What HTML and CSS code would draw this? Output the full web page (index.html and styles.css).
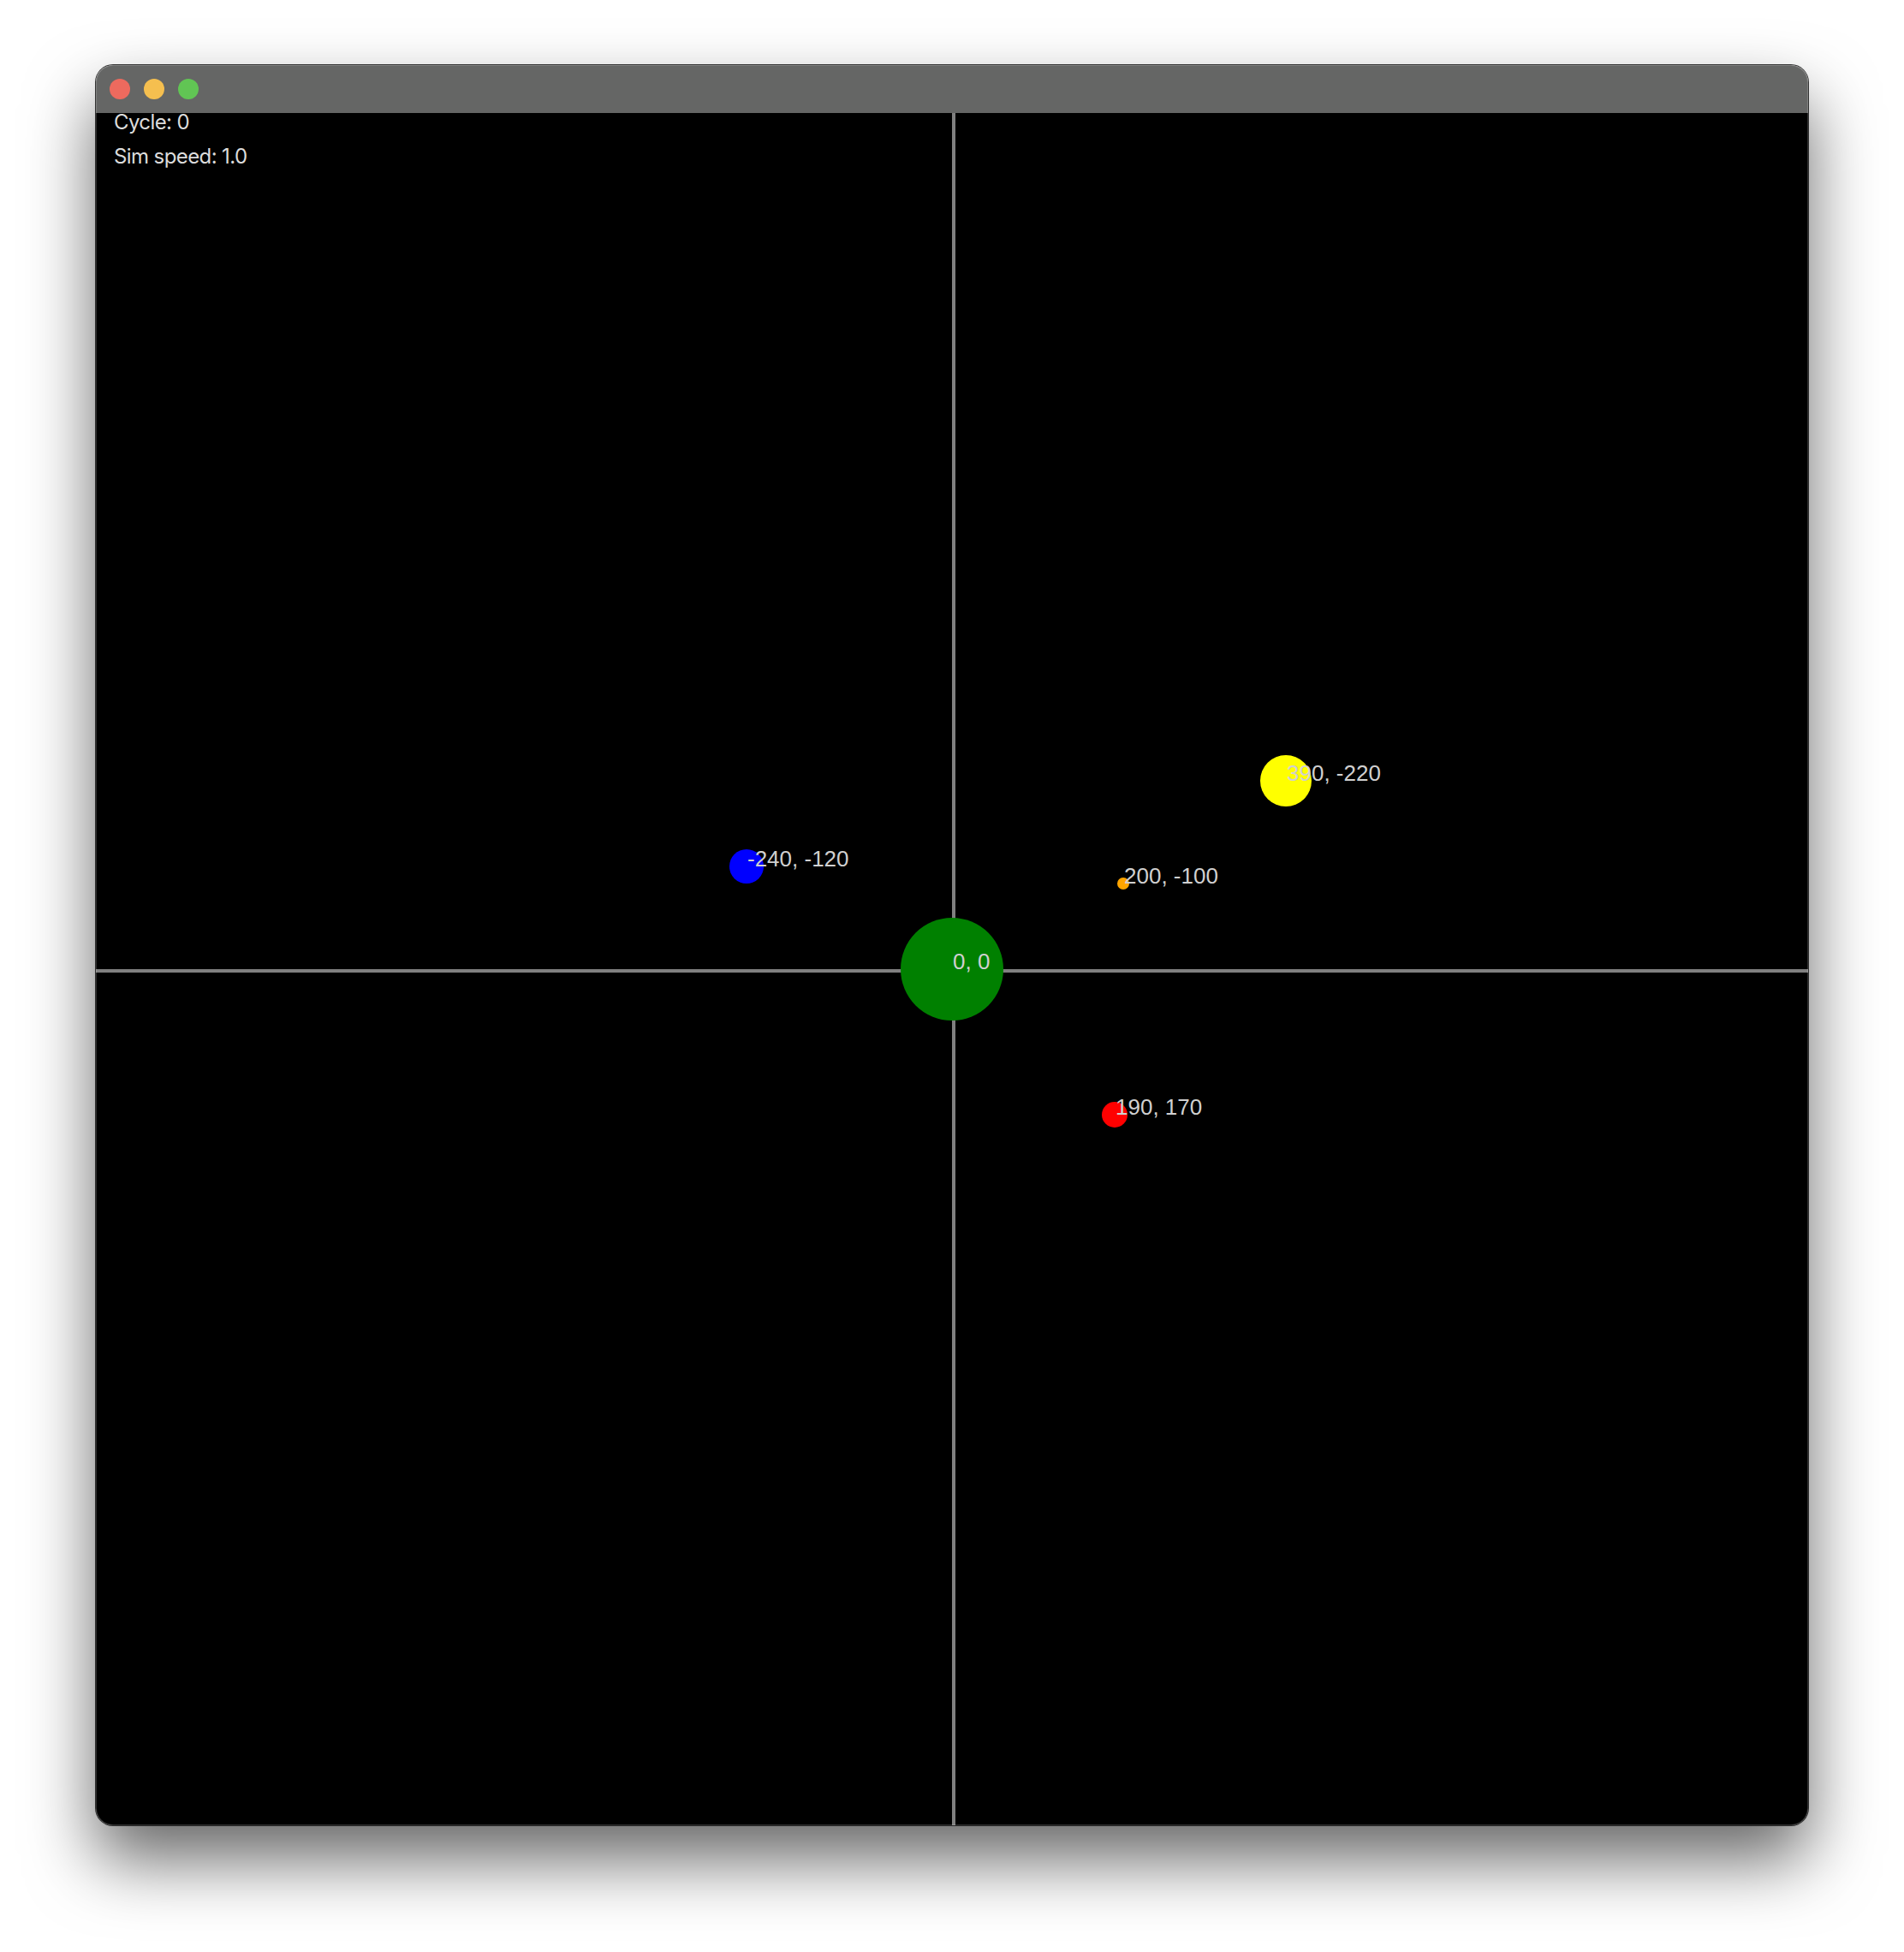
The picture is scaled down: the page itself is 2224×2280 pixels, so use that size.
FILE: index.html
```html
<!DOCTYPE html>
<html>
<head>
<meta charset="utf-8">
<link rel="stylesheet" href="styles.css">
</head>
<body>
<div class="window">
  <div class="titlebar">
    <span class="light red"></span>
    <span class="light yellow"></span>
    <span class="light green"></span>
  </div>
  <div class="canvas">
    <svg class="scene" width="2000" height="2000" viewBox="0 0 2000 2000">
      <rect x="1000" y="0" width="4" height="2000" fill="#808080"/>
      <rect x="0" y="1000" width="2000" height="4" fill="#808080"/>
      <circle cx="1000" cy="1000" r="60" fill="#008000"/>
      <circle cx="1390" cy="780" r="30" fill="#ffff00"/>
      <circle cx="760" cy="880" r="20" fill="#0000ff"/>
      <circle cx="1200" cy="900" r="7" fill="#ffa500"/>
      <circle cx="1190" cy="1170" r="15" fill="#ff0000"/>
      <g class="labels">
        <text x="1001" y="1000">0, 0</text>
        <text x="1391" y="780">390, -220</text>
        <text x="761" y="880">-240, -120</text>
        <text x="1201" y="900">200, -100</text>
        <text x="1191" y="1170">190, 170</text>
      </g>
    </svg>
    <div class="hud">
      <div class="hud-line">Cycle: 0</div>
      <div class="hud-line">Sim speed: 1.0</div>
    </div>
  </div>
</div>
</body>
</html>
```

FILE: styles.css
```css
html, body {
  margin: 0;
  padding: 0;
  background: #ffffff;
}

body {
  width: 2224px;
  height: 2280px;
  overflow: hidden;
}

.window {
  position: relative;
  margin: 76px 0 0 112px;
  width: 2000px;
  display: flex;
  flex-direction: column;
  border-radius: 20px;
  overflow: hidden;
  box-shadow: 0 0 0 1px rgba(20, 20, 20, 0.85), 0 40px 80px rgba(0, 0, 0, 0.6);
}

.window::after {
  content: "";
  position: absolute;
  inset: 0;
  border-radius: 20px;
  box-shadow: inset 0 0 0 1px rgba(255, 255, 255, 0.18);
  pointer-events: none;
}

.titlebar {
  height: 56px;
  background: #656665;
  display: flex;
  align-items: center;
  gap: 16px;
  padding-left: 16px;
}

.light {
  width: 24px;
  height: 24px;
  border-radius: 50%;
}

.red { background: #ed6a5e; }
.yellow { background: #f5bf4f; }
.green { background: #61c554; }

.canvas {
  position: relative;
  width: 2000px;
  height: 2000px;
  background: #000000;
}

.scene {
  display: block;
}

.labels text {
  font-family: "Liberation Sans", Arial, sans-serif;
  font-size: 26px;
  fill: #d0d0d0;
}

.hud {
  position: absolute;
  left: 21px;
  top: -9px;
  font-family: Inter, "Noto Sans", sans-serif;
  font-size: 24px;
  line-height: 40px;
  letter-spacing: -0.6px;
  color: #dcdcdc;
}
```
